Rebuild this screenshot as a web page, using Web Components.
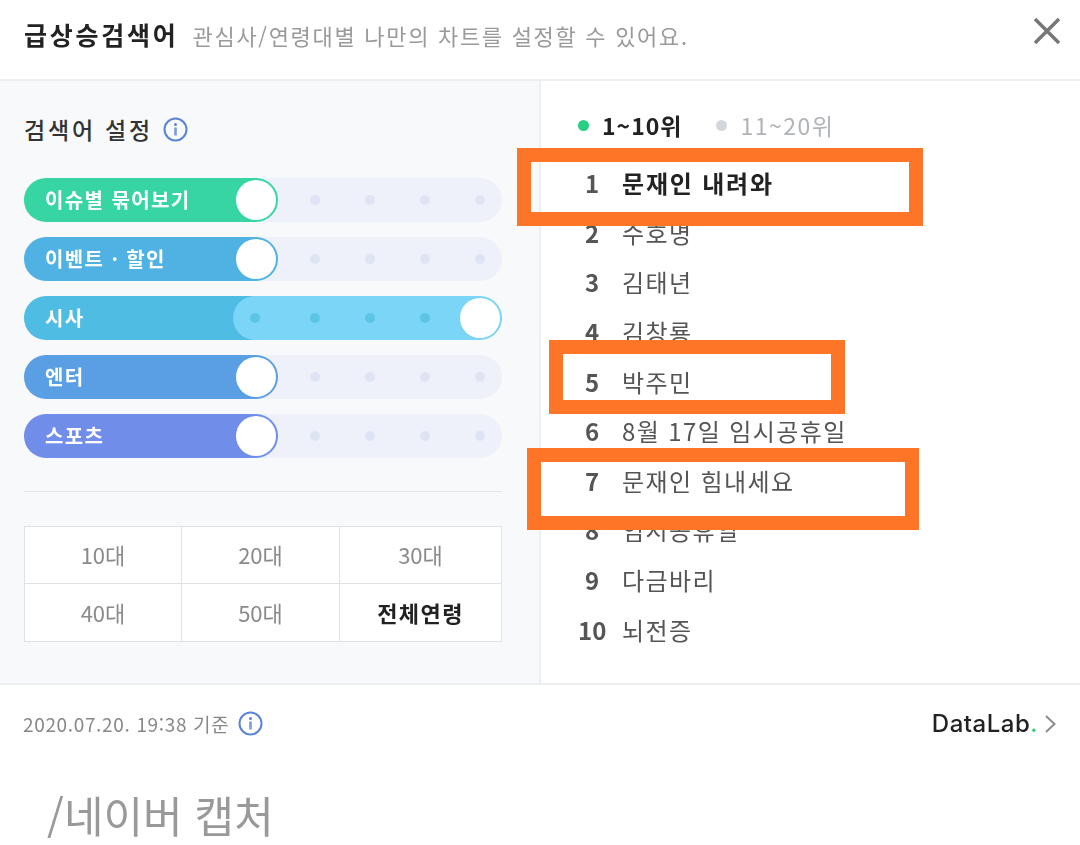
<!DOCTYPE html>
<html lang="ko">
<head>
<meta charset="utf-8">
<title>급상승검색어</title>
<style>
  html, body { margin: 0; background: #fff; }
  body { font-family: "Noto Sans CJK KR", "Noto Sans", sans-serif; }
</style>
</head>
<body>
<trend-app>
  <trend-header slot="header" title="급상승검색어" desc="관심사/연령대별 나만의 차트를 설정할 수 있어요."></trend-header>
  <trend-settings slot="left">
    <trend-toggle color="#38d5a4">이슈별 묶어보기</trend-toggle>
    <trend-toggle color="#50b1e3">이벤트 · 할인</trend-toggle>
    <trend-toggle color="#4fbce3" active>시사</trend-toggle>
    <trend-toggle color="#5a9fe4">엔터</trend-toggle>
    <trend-toggle color="#6f8de9">스포츠</trend-toggle>
  </trend-settings>
  <trend-ranks slot="right"></trend-ranks>
  <trend-footer slot="footer"></trend-footer>
</trend-app>

<script>
const font = `"Noto Sans CJK KR", "Noto Sans", sans-serif`;

class InfoIcon extends HTMLElement {
  connectedCallback() {
    this.attachShadow({ mode: 'open' }).innerHTML = `
      <style>:host { display: inline-flex; width: 25px; height: 25px; }</style>
      <svg width="25" height="25" viewBox="0 0 25 25" fill="none">
        <circle cx="12.5" cy="12.5" r="11" stroke="#5b84d6" stroke-width="2"/>
        <circle cx="12.5" cy="7.6" r="1.5" fill="#5b84d6"/>
        <rect x="11.2" y="10.5" width="2.6" height="8" fill="#7d9bdc"/>
      </svg>`;
  }
}

class TrendHeader extends HTMLElement {
  connectedCallback() {
    this.attachShadow({ mode: 'open' }).innerHTML = `
      <style>
        :host { display: flex; align-items: center; height: 81px; padding: 0 20px 10px 24px; box-sizing: border-box; border-bottom: 2px solid #eceef0; }
        h1 { margin: 0; font-size: 25px; font-weight: 700; letter-spacing: 2.75px; color: #222; line-height: 1; }
        p { margin: 0 0 0 14px; font-size: 22px; letter-spacing: 1.7px; color: #9a9a9a; line-height: 1; }
        svg { margin-left: auto; margin-top: -7px; }
      </style>
      <h1>${this.getAttribute('title')}</h1>
      <p>${this.getAttribute('desc')}</p>
      <svg width="26" height="26" viewBox="0 0 26 26"><path d="M1 1 25 25M25 1 1 25" stroke="#777" stroke-width="3.5" fill="none"/></svg>`;
  }
}

class TrendToggle extends HTMLElement {
  connectedCallback() {
    const active = this.hasAttribute('active');
    const dots = '<i></i>'.repeat(4);
    const knob = '<b></b>';
    this.attachShadow({ mode: 'open' }).innerHTML = `
      <style>
        :host { display: block; height: 44px; }
        .track { display: flex; height: 44px; border-radius: 22px; background: #eef1f9; }
        .fill { display: flex; align-items: center; flex: none; width: 254px; box-sizing: border-box; padding-left: 21px; border-radius: 22px; background: ${this.getAttribute('color')}; color: #fff; font-size: 20px; font-weight: 700; letter-spacing: 1.4px; white-space: nowrap; }
        .fill span { margin-bottom: 2px; }
        .rest { display: flex; align-items: center; flex: 1; gap: 45px; padding-left: 32px; }
        .on .rest { margin-left: -45px; padding-left: 17px; background: #7bd5f7; border-radius: 22px; }
        i { flex: none; width: 10px; height: 10px; border-radius: 50%; background: #dfe4f4; }
        .on i { background: #5cc5e6; }
        .on i:first-child { margin-right: 5px; }
        b { flex: none; width: 40px; height: 40px; border-radius: 50%; background: #fff; }
        .fill b { margin-left: auto; margin-right: 2px; }
        .rest b { margin-left: -15px; }
      </style>
      <div class="track ${active ? 'on' : ''}">
        <div class="fill"><span><slot></slot></span>${active ? '' : knob}</div>
        <div class="rest">${dots}${active ? knob : ''}</div>
      </div>`;
  }
}

class AgeGrid extends HTMLElement {
  connectedCallback() {
    const ages = ['10대', '20대', '30대', '40대', '50대', '전체연령'];
    this.attachShadow({ mode: 'open' }).innerHTML = `
      <style>
        :host { display: grid; grid-template-columns: 157px 158px 1fr; grid-auto-rows: 57px; border: 1px solid #dfe3e6; background: #fff; }
        div { display: flex; align-items: center; justify-content: center; padding-bottom: 2px; box-sizing: border-box; font-size: 22px; color: #8a8a8a; border-right: 1px solid #dfe3e6; border-bottom: 1px solid #dfe3e6; }
        div:nth-of-type(3n) { border-right: 0; }
        div:nth-of-type(n+4) { border-bottom: 0; }
        .sel { color: #222; font-weight: 700; letter-spacing: 1.4px; }
      </style>
      ${ages.map((a, i) => `<div class="${i === 5 ? 'sel' : ''}">${a}</div>`).join('')}`;
  }
}

class TrendSettings extends HTMLElement {
  connectedCallback() {
    this.attachShadow({ mode: 'open' }).innerHTML = `
      <style>
        :host { display: flex; flex-direction: column; width: 541px; height: 602px; box-sizing: border-box; padding: 35px 37px 0 24px; background: #f7f9fb; border-right: 2px solid #eceff2; }
        .title { display: flex; align-items: center; gap: 10px; height: 26px; margin-bottom: 36px; font-size: 23px; font-weight: 500; letter-spacing: 2.8px; color: #333; }
        .list { display: flex; flex-direction: column; gap: 15px; }
        hr { width: 100%; margin: 33px 0 34px; border: 0; border-top: 1px solid #e4e7ea; }
      </style>
      <div class="title">검색어 설정 <info-icon></info-icon></div>
      <div class="list"><slot></slot></div>
      <hr>
      <age-grid></age-grid>`;
  }
}

class TrendRanks extends HTMLElement {
  connectedCallback() {
    const words = ['문재인 내려와', '수호명', '김태년', '김창룡', '박주민', '8월 17일 임시공휴일', '문재인 힘내세요', '임시공휴일', '다금바리', '뇌전증'];
    this.attachShadow({ mode: 'open' }).innerHTML = `
      <style>
        :host { display: block; flex: 1; padding: 28px 0 0 37px; background: #fff; }
        .tabs { display: flex; align-items: center; height: 32px; margin-bottom: 17px; font-size: 23px; line-height: 1; color: #b0b4b8; }
        .tabs i { width: 11px; height: 11px; margin-right: 13px; border-radius: 50%; background: #d3d7db; }
        .tabs i.cur { background: #27cf85; }
        .tabs b { margin-right: 33px; color: #222; font-weight: 700; letter-spacing: 1px; }
        .tabs span { margin-left: 1px; letter-spacing: 1.5px; }
        ol { margin: 0; padding: 0; list-style: none; }
        li { display: flex; align-items: center; height: 49.6px; font-size: 24px; letter-spacing: 1.4px; color: #555; white-space: nowrap; }
        li span { flex: none; width: 28px; margin-right: 16px; text-align: center; font-weight: 700; letter-spacing: 0; color: #555; }
        li:first-child { color: #222; font-weight: 700; letter-spacing: 1.8px; }
      </style>
      <div class="tabs"><i class="cur"></i><b>1~10위</b><i></i><span>11~20위</span></div>
      <ol>${words.map((w, i) => `<li><span>${i + 1}</span>${w}</li>`).join('')}</ol>`;
  }
}

class TrendFooter extends HTMLElement {
  connectedCallback() {
    this.attachShadow({ mode: 'open' }).innerHTML = `
      <style>
        :host { display: flex; align-items: center; height: 79px; padding: 0 24px 0 23px; box-sizing: border-box; border-top: 2px solid #eceef0; }
        .date { font-size: 19px; letter-spacing: .65px; color: #888; margin-right: 9px; }
        .logo { margin-left: auto; font-family: Inter, "Liberation Sans", sans-serif; font-size: 24px; font-weight: 500; letter-spacing: .5px; color: #222; }
        .logo em { font-style: normal; color: #35cc7f; }
        svg { margin-left: 7px; }
      </style>
      <span class="date">2020.07.20. 19:38 기준</span>
      <info-icon></info-icon>
      <span class="logo">DataLab<em>.</em></span>
      <svg width="11" height="18" viewBox="0 0 11 18"><path d="M1 1l8.5 8L1 17" stroke="#8c8c8c" stroke-width="2" fill="none"/></svg>`;
  }
}

class TrendApp extends HTMLElement {
  connectedCallback() {
    this.attachShadow({ mode: 'open' }).innerHTML = `
      <style>
        :host { display: block; position: relative; width: 1080px; height: 845px; overflow: hidden; font-family: ${font}; filter: blur(.4px); }
        .body { display: flex; }
        .caption { margin: 22px 0 0 47px; font-size: 43px; line-height: 60px; color: #999; }
        /* boxes drawn over the list */
        .mark { position: absolute; box-sizing: border-box; border: 14.5px solid #ff7527; }
      </style>
      <slot name="header"></slot>
      <div class="body"><slot name="left"></slot><slot name="right"></slot></div>
      <slot name="footer"></slot>
      <div class="caption">/네이버 캡처</div>
      <div class="mark" style="left:517px;top:148px;width:406px;height:78px"></div>
      <div class="mark" style="left:549px;top:340px;width:296px;height:74px"></div>
      <div class="mark" style="left:527px;top:448px;width:392px;height:82px"></div>`;
  }
}

customElements.define('info-icon', InfoIcon);
customElements.define('age-grid', AgeGrid);
customElements.define('trend-header', TrendHeader);
customElements.define('trend-toggle', TrendToggle);
customElements.define('trend-settings', TrendSettings);
customElements.define('trend-ranks', TrendRanks);
customElements.define('trend-footer', TrendFooter);
customElements.define('trend-app', TrendApp);
</script>
</body>
</html>
